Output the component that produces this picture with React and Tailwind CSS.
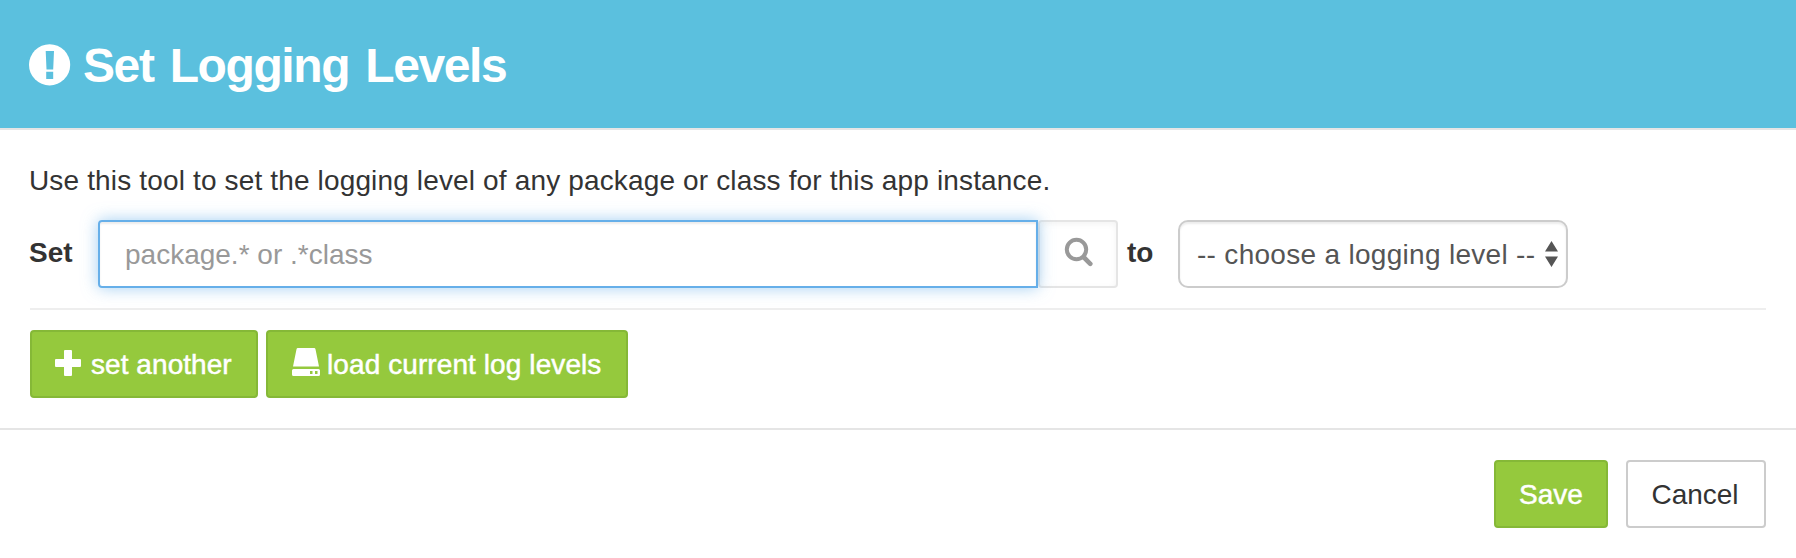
import React from 'react';

const greenButton =
  'flex h-[68px] items-center rounded-[4px] border-2 border-[#85b837] bg-[#95c93d] text-[28px] leading-[40px] text-white [-webkit-text-stroke:0.5px_white]';

function AlertIcon() {
  return (
    <svg className="h-[42px] w-[42px] shrink-0" viewBox="0 0 42 42">
      <circle cx="20.600" cy="20.800" r="20.600" fill="#fff" />
      <path d="M16.700 7h8.300l-.8 18.600h-6.700zM17.200 27.800h7v7.200h-7z" fill="#5bc0de" />
    </svg>
  );
}

function SearchIcon() {
  return (
    <svg className="ml-[2px] h-[30px] w-[30px]" viewBox="0 0 30 30" fill="none" stroke="#999" strokeLinecap="round">
      <circle cx="12.500" cy="12.500" r="9.700" strokeWidth="4" />
      <path d="M20 20.500l6.300 6.300" strokeWidth="4.600" />
    </svg>
  );
}

function PlusIcon() {
  return (
    <svg className="mb-[2px] h-[26px] w-[26px] shrink-0" viewBox="0 0 26 26" fill="#fff">
      <path d="M10 0h6a1 1 0 0 1 1 1v8h8a1 1 0 0 1 1 1v6a1 1 0 0 1-1 1h-8v8a1 1 0 0 1-1 1h-6a1 1 0 0 1-1-1v-8H1a1 1 0 0 1-1-1v-6a1 1 0 0 1 1-1h8V1a1 1 0 0 1 1-1z" />
    </svg>
  );
}

function DriveIcon() {
  return (
    <svg className="mb-[4px] h-[28px] w-[28px] shrink-0" viewBox="0 0 28 28" fill="#fff">
      <path d="M6 0h16a1.500 1.500 0 0 1 1.500 1.200L27 18.500H1L4.500 1.200A1.500 1.500 0 0 1 6 0z" />
      <path fillRule="evenodd" d="M1.500 21h25a1.500 1.500 0 0 1 1.500 1.500v4a1.500 1.500 0 0 1-1.500 1.500h-25A1.500 1.500 0 0 1 0 26.500v-4A1.500 1.500 0 0 1 1.500 21zM18 23v3h2.500v-3zM23 23v3h2.500v-3z" />
    </svg>
  );
}

export default function App() {
  return (
    <main className="flex h-[558px] w-[1796px] flex-col bg-white font-['Liberation_Sans',sans-serif] text-[#333333]">
      <header className="flex h-[130px] items-center gap-[12px] border-b-2 border-[#e5e5e5] bg-[#5bc0de] px-[29px] pt-px text-white">
        <AlertIcon />
        <h1 className="pt-[2px] text-[48px] font-bold tracking-[-1.4px] [word-spacing:4.2px]">Set Logging Levels</h1>
      </header>
      <section className="flex h-[300px] flex-col border-b-2 border-[#e5e5e5] px-[30px] pt-[31px]">
        <p className="-ml-px h-[59px] text-[28px] leading-[40px] tracking-[0.15px]">
          Use this tool to set the logging level of any package or class for this app instance.
        </p>
        <div className="flex h-[68px] items-center">
          <label htmlFor="pkg" className="-ml-px w-[69px] pb-[2px] text-[28px] leading-[40px] font-bold">
            Set
          </label>
          <input
            id="pkg"
            className="z-10 h-[68px] w-[940px] rounded-l-[4px] border-2 border-[#66afe9] px-[25px] pt-[2px] text-[28px] shadow-[inset_0_2px_2px_rgba(0,0,0,0.075),0_0_16px_rgba(102,175,233,0.6)] outline-none placeholder:text-[#999999]"
            placeholder="package.* or .*class"
          />
          <button className="flex h-[68px] w-[80px] items-center justify-center rounded-[4px] border-2 border-[#e5e5e5] pb-1 shadow-[inset_0_2px_6px_rgba(0,0,0,0.05)]">
            <SearchIcon />
          </button>
          <span className="w-[60px] pb-[2px] pl-[9px] text-[28px] leading-[40px] font-bold">to</span>
          <button className="flex h-[68px] w-[390px] items-center justify-between rounded-[10px] border-2 border-[#cccccc] pr-[8px] pl-[17px] text-[28px] tracking-[0.3px] text-[#555555] shadow-[inset_0_2px_2px_rgba(0,0,0,0.075)]">
            <span className="pt-[2px]">-- choose a logging level --</span>
            <svg className="h-[26px] w-[13px]" viewBox="0 0 13 26" fill="#555">
              <path d="M6.500 0 13 10.500H0zM6.500 26 0 15.500h13z" />
            </svg>
          </button>
        </div>
        <hr className="mt-[20px] border-t-2 border-[#eeeeee]" />
        <div className="mt-[20px] flex gap-[8px]">
          <button className={`${greenButton} w-[228px] gap-[10px] pl-[23px] tracking-[0.06px]`}>
            <PlusIcon />
            <span className="pt-[2px]">set another</span>
          </button>
          <button className={`${greenButton} w-[362px] gap-[7px] pl-[24px] tracking-[0.09px]`}>
            <DriveIcon />
            <span className="pt-[2px]">load current log levels</span>
          </button>
        </div>
      </section>
      <footer className="flex justify-end gap-[18px] px-[30px] pt-[30px]">
        <button className={`${greenButton} w-[114px] justify-center pt-[2px]`}>Save</button>
        <button className="flex h-[68px] w-[140px] items-center justify-center rounded-[4px] border-2 border-[#cccccc] pt-[2px] pr-[2px] text-[28px] leading-[40px]">
          Cancel
        </button>
      </footer>
    </main>
  );
}
